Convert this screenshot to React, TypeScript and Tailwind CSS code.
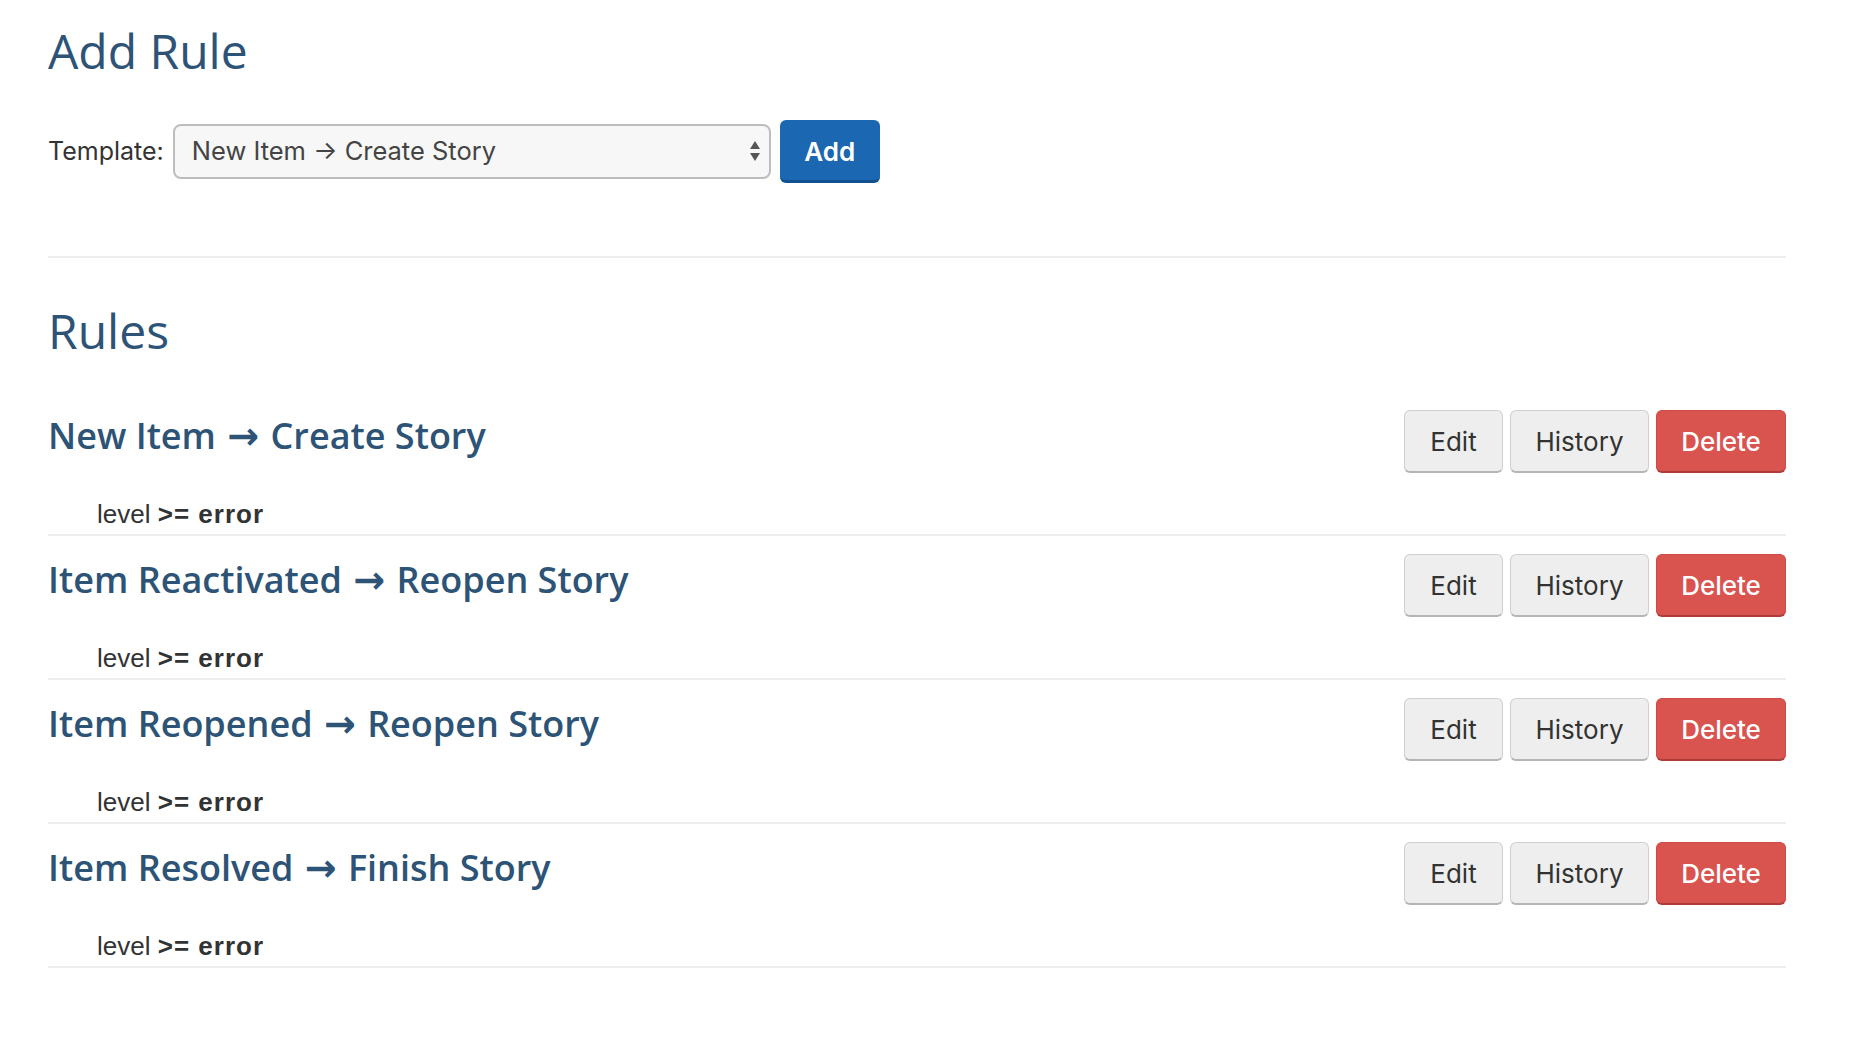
const rules = [
  { from: "New Item", to: "Create Story", field: "level", op: ">=", value: "error" },
  { from: "Item Reactivated", to: "Reopen Story", field: "level", op: ">=", value: "error" },
  { from: "Item Reopened", to: "Reopen Story", field: "level", op: ">=", value: "error" },
  { from: "Item Resolved", to: "Finish Story", field: "level", op: ">=", value: "error" },
];

const heading = "font-['Open_Sans',sans-serif] text-[#2d5377]";
const ui = "font-['Inter','Liberation_Sans',sans-serif]";

const SelectArrows = () => (
  <svg width="12" height="22" viewBox="0 0 12 22" className="shrink-0">
    <path d="M6 1 L11 9 L1 9 Z" fill="#555" />
    <path d="M1 13 L11 13 L6 21 Z" fill="#555" />
  </svg>
);

const RuleRow = ({ rule }: { rule: (typeof rules)[number] }) => (
  <div className="border-b-2 border-[#eeeeee] pt-[18px] pb-[2px]">
    <div className="flex h-[63px] items-start justify-between">
      <h3 className={`${heading} mt-[6px] text-[36px] font-semibold leading-[40px]`}>
        {rule.from}{" "}
        <span className="mx-[2px] font-['DejaVu_Sans',sans-serif] text-[38px]">→</span>{" "}
        {rule.to}
      </h3>
      <div className={`${ui} flex gap-[7px] text-[26px] leading-none`}>
        <button className="h-[63px] w-[99px] rounded-[6px] border border-[#cfcfcf] border-b-[#b5b5b5] border-b-2 bg-[#eeeeee] pt-[2px] text-[#333]">
          Edit
        </button>
        <button className="h-[63px] w-[139px] rounded-[6px] border border-[#cfcfcf] border-b-[#b5b5b5] border-b-2 bg-[#eeeeee] pt-[2px] text-[#333]">
          History
        </button>
        <button className="h-[63px] w-[130px] rounded-[6px] border border-[#cf4a46] border-b-[#b03c39] border-b-2 bg-[#d9534f] pt-[2px] font-medium text-white">
          Delete
        </button>
      </div>
    </div>
    <p className="mt-[23px] pl-[49px] font-['Liberation_Sans',Arial,sans-serif] text-[26px] leading-[36px] text-[#333]">
      {rule.field}{" "}
      <b className="tracking-[1px]">
        {rule.op} {rule.value}
      </b>
    </p>
  </div>
);

export default function App() {
  return (
    <div className="min-h-[1048px] w-full bg-white pl-[48px] pr-[82px]">
      {/* add form */}
      <h1 className={`${heading} pt-[25px] text-[48px] font-normal leading-[1.1]`}>Add Rule</h1>
      <div className="mt-[42px] flex h-[63px] items-center">
        <label className={`${ui} mr-[9px] text-[25px] text-[#333]`}>Template:</label>
        <div className="flex h-[55px] w-[598px] items-center justify-between rounded-[8px] border-2 border-[#bdbdbd] bg-[#f7f7f7] pl-[17px] pr-[8px]">
          <span className={`${ui} text-[25.5px] text-[#444]`}>New Item → Create Story</span>
          <SelectArrows />
        </div>
        <button
          className={`${ui} ml-[9px] h-[63px] w-[100px] rounded-[6px] border-b-[3px] border-[#11518f] bg-[#1b67b1] pt-[3px] text-[26px] font-semibold text-white`}
        >
          Add
        </button>
      </div>
      <hr className="mt-[73px] border-t-2 border-[#eeeeee]" />

      {/* existing rules */}
      <h2 className={`${heading} mt-[47px] text-[48px] font-normal leading-[1.1]`}>Rules</h2>
      <div className="mt-[34px]">
        {rules.map((r) => (
          <RuleRow key={r.from} rule={r} />
        ))}
      </div>
    </div>
  );
}
